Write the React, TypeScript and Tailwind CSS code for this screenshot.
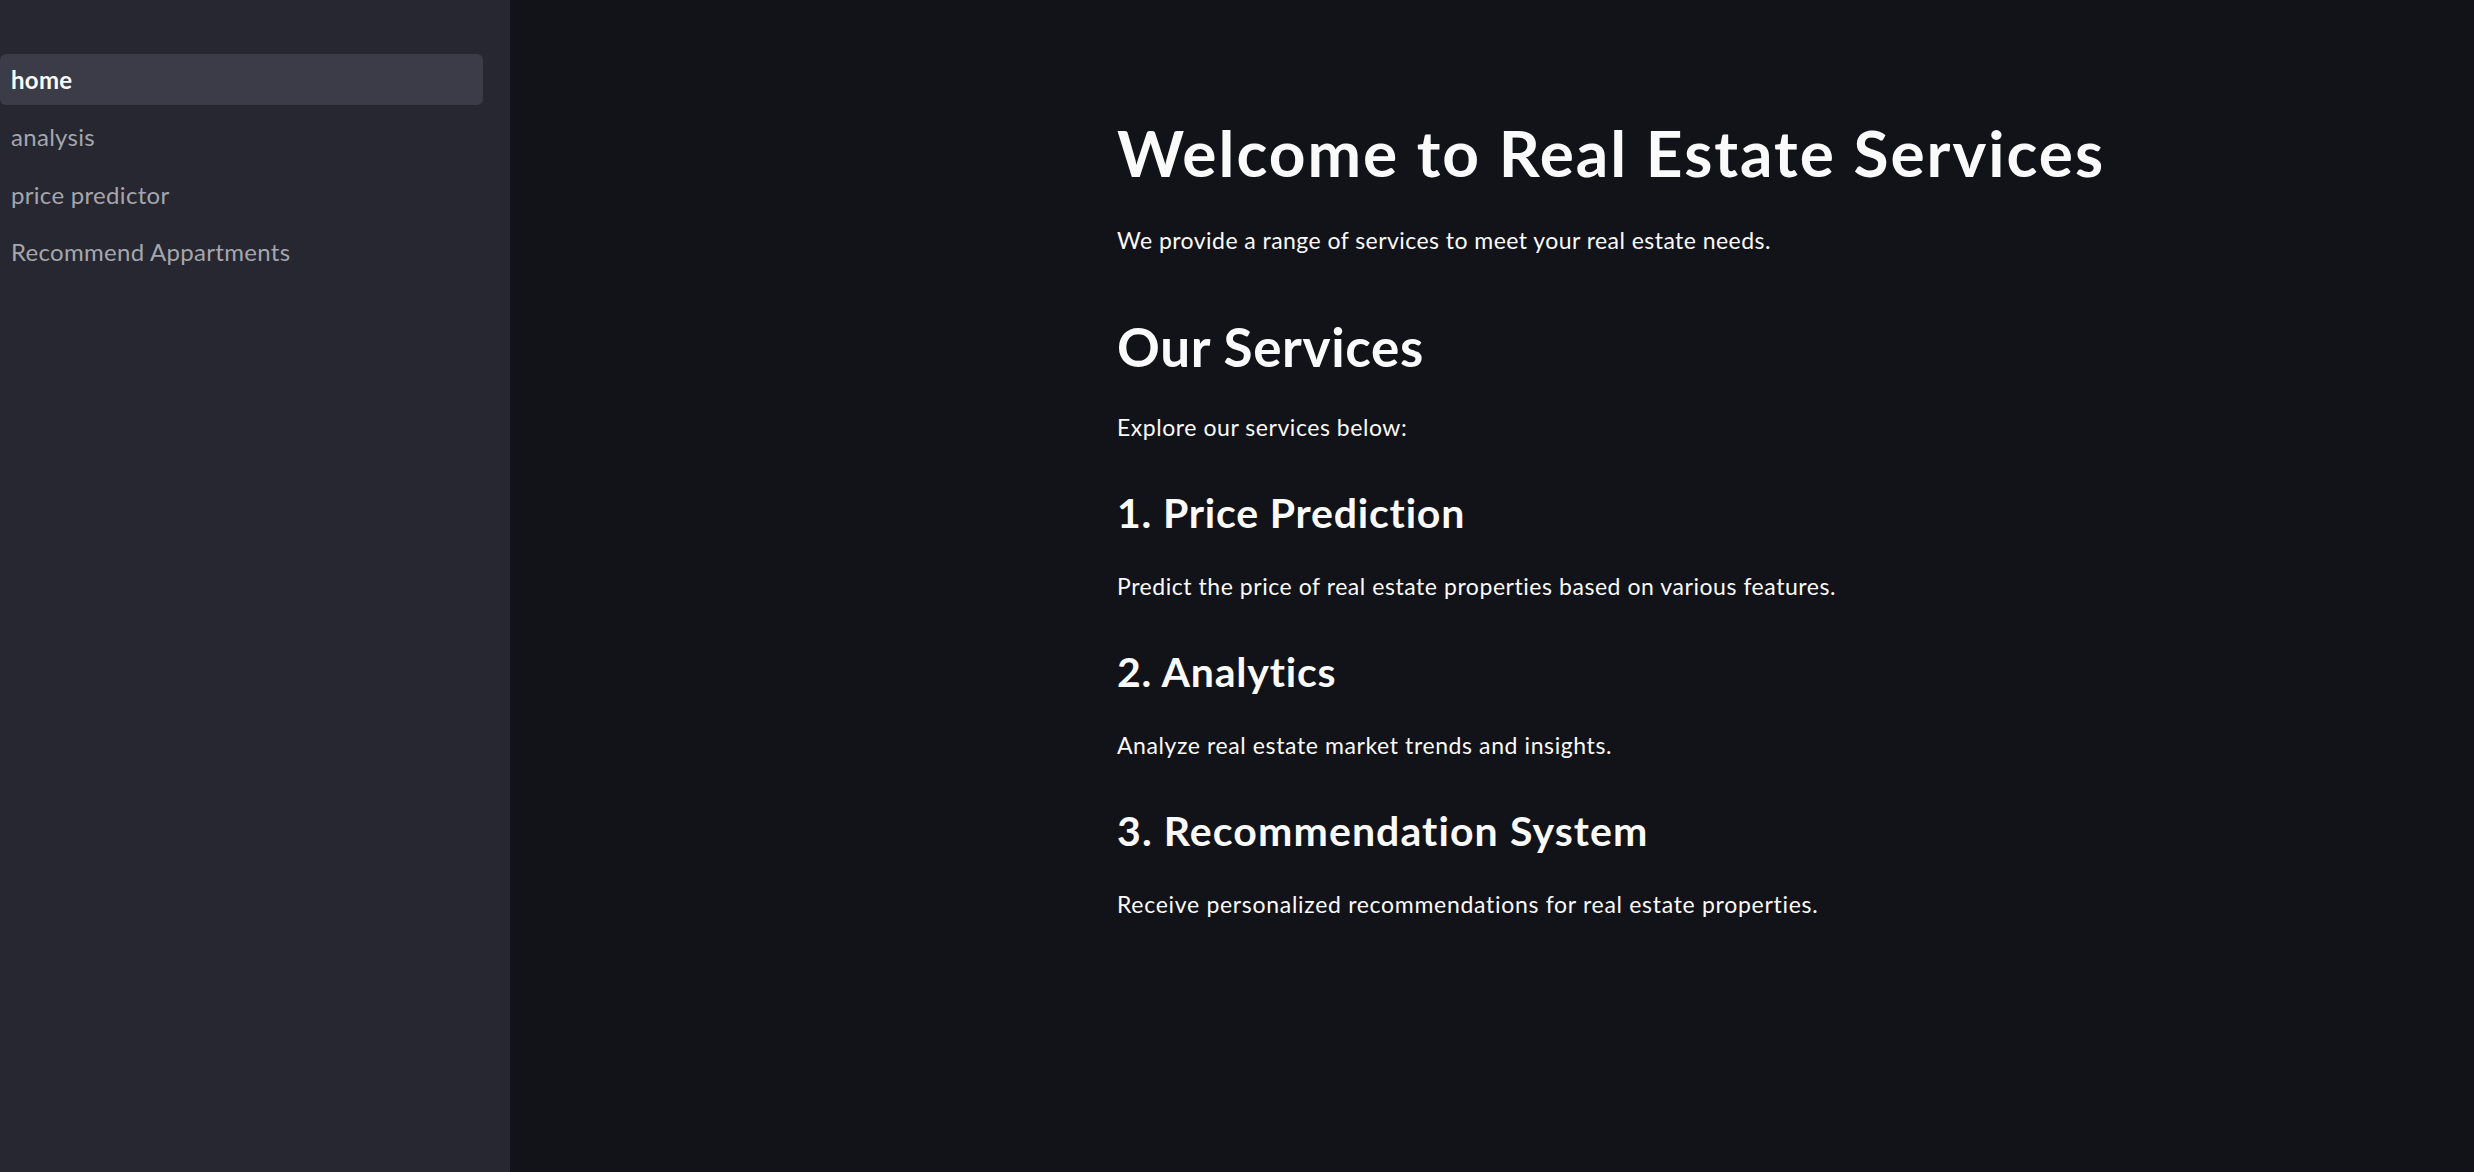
import React from "react";

const navItems = [
  { label: "home", active: true },
  { label: "analysis", active: false },
  { label: "price predictor", active: false },
  { label: "Recommend Appartments", active: false },
];

const services = [
  {
    title: "1. Price Prediction",
    text: "Predict the price of real estate properties based on various features.",
    titleClass: "mt-[44px] text-[41px] leading-[50px] font-bold tracking-[0.8px]",
    textClass: "mt-[31px] text-[23px] leading-[34px] tracking-[0.55px]",
  },
  {
    title: "2. Analytics",
    text: "Analyze real estate market trends and insights.",
    titleClass: "mt-[44px] text-[41px] leading-[50px] font-bold tracking-[0.8px]",
    textClass: "mt-[31px] text-[23px] leading-[34px] tracking-[0.6px]",
  },
  {
    title: "3. Recommendation System",
    text: "Receive personalized recommendations for real estate properties.",
    titleClass: "mt-[44px] text-[41px] leading-[50px] font-bold tracking-[1.1px]",
    textClass: "mt-[31px] text-[23px] leading-[34px] tracking-[0.7px]",
  },
];

export default function App() {
  return (
    <div
      className="flex w-full h-[1172px] overflow-hidden bg-[#121318] text-[#fafafa]"
      style={{ fontFamily: "Lato, 'Noto Sans', sans-serif" }}
    >
      <aside className="w-[510px] shrink-0 h-full bg-[#262730] pt-[54px] pr-[27px]">
        <nav className="flex flex-col gap-[6.33px]">
          {navItems.map((item) => (
            <div
              key={item.label}
              className={
                item.active
                  ? "h-[51px] flex items-center pl-[11px] rounded-[6px] bg-[#3b3c47] text-[#fafafa] font-bold text-[24px] leading-[29px] tracking-[0.3px]"
                  : "h-[51px] flex items-center pl-[11px] rounded-[6px] text-[#a5a6ad] text-[24px] leading-[29px] tracking-[0.3px]"
              }
            >
              {item.label}
            </div>
          ))}
        </nav>
      </aside>
      <main className="flex-1 h-full pl-[607px] pt-[113px]">
        <h1 className="text-[64px] leading-[80px] font-bold whitespace-nowrap tracking-[2px]">
          Welcome to Real Estate Services
        </h1>
        <p className="mt-[30px] text-[23px] leading-[34px] tracking-[0.45px]">
          We provide a range of services to meet your real estate needs.
        </p>
        <h2 className="mt-[58px] text-[53px] leading-[64px] font-bold tracking-[0.65px]">
          Our Services
        </h2>
        <p className="mt-[31px] text-[23px] leading-[34px] tracking-[0.55px]">
          Explore our services below:
        </p>
        {services.map((s) => (
          <section key={s.title}>
            <h3 className={s.titleClass}>{s.title}</h3>
            <p className={s.textClass}>{s.text}</p>
          </section>
        ))}
      </main>
    </div>
  );
}
